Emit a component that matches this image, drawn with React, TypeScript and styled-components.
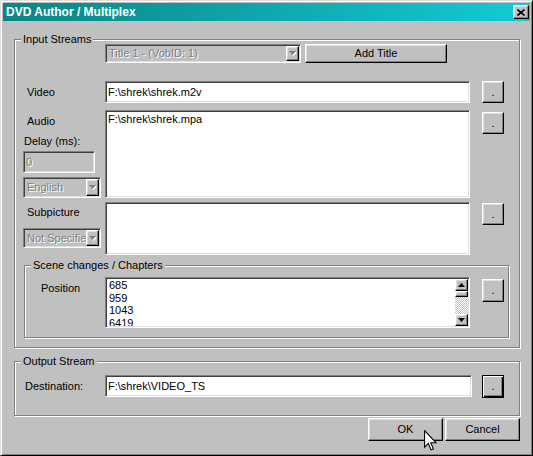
import React from 'react';
import styled, { createGlobalStyle, css } from 'styled-components';

const GlobalStyle = createGlobalStyle`
  html, body { margin: 0; padding: 0; background: #c0c0c0; }
  body { font-family: "Liberation Sans", Arial, sans-serif; font-size: 11px; }
  * { box-sizing: border-box; }
`;

const raised = css`
  border: 1px solid;
  border-color: #fff #000 #000 #fff;
  box-shadow: inset -1px -1px 0 #808080, inset 1px 1px 0 #dfdfdf;
  background: #c0c0c0;
`;

const sunken = css`
  border: 1px solid;
  border-color: #808080 #fff #fff #808080;
  box-shadow: inset 1px 1px 0 #404040, inset -1px -1px 0 #dfdfdf;
`;

const Window = styled.div`
  position: relative;
  width: 533px;
  height: 456px;
  background: #c0c0c0;
  border: 1px solid;
  border-color: #dfdfdf #000 #000 #dfdfdf;
  box-shadow: inset 1px 1px 0 #fff, inset -1px -1px 0 #808080;
  padding: 2px;
  display: flex;
  flex-direction: column;
  font-family: "Liberation Sans", Arial, sans-serif;
  font-size: 11px;
  line-height: 13px;
  color: #000;
  overflow: hidden;
`;

const TitleBar = styled.div`
  height: 18px;
  flex: none;
  display: flex;
  align-items: center;
  justify-content: space-between;
  padding: 0 1px 0 3px;
  background: linear-gradient(to right, #0a8585, #12cbd5);
`;

const TitleText = styled.span`
  color: #fff;
  font-weight: bold;
  font-size: 12px;
  white-space: nowrap;
`;

const CloseButton = styled.div`
  ${raised};
  width: 16px;
  height: 14px;
  display: flex;
  align-items: center;
  justify-content: center;
`;

const Body = styled.div`
  padding: 18px 10px 0 11px;
  display: flex;
  flex-direction: column;
`;

const Group = styled.div<{ $mt?: number; $ml?: number; $pad: string }>`
  position: relative;
  margin-top: ${(p) => p.$mt ?? 0}px;
  margin-left: ${(p) => p.$ml ?? 0}px;
  border: 1px solid #808080;
  box-shadow: inset 1px 1px 0 #fff, 1px 1px 0 #fff;
  padding: ${(p) => p.$pad};
  display: flex;
  flex-direction: column;
`;

const Legend = styled.span`
  position: absolute;
  top: -7px;
  left: 6px;
  padding: 0 2px;
  background: #c0c0c0;
  line-height: 13px;
  white-space: nowrap;
`;

const TitleRow = styled.div`
  display: flex;
  gap: 4px;
  padding-left: 82px;
  height: 19px;
`;

const FieldRow = styled.div<{ $mt: number; $cols?: string; $gap?: number }>`
  display: grid;
  grid-template-columns: ${(p) => p.$cols ?? '70px 365px 22px'};
  column-gap: ${(p) => p.$gap ?? 12}px;
  margin-top: ${(p) => p.$mt}px;
  align-items: start;
`;

const LeftCol = styled.div`
  display: flex;
  flex-direction: column;
  align-items: flex-start;
`;

const Label = styled.div<{ $pl?: number; $pt?: number; $mt?: number; $h?: number }>`
  padding-left: ${(p) => p.$pl ?? 0}px;
  padding-top: ${(p) => p.$pt ?? 0}px;
  margin-top: ${(p) => p.$mt ?? 0}px;
  height: ${(p) => (p.$h ? `${p.$h}px` : 'auto')};
  display: flex;
  align-items: ${(p) => (p.$h ? 'center' : 'flex-start')};
  white-space: nowrap;
`;

const Field = styled.div<{ $w?: number; $h: number; $disabled?: boolean; $mt?: number }>`
  ${sunken};
  flex: none;
  width: ${(p) => (p.$w ? `${p.$w}px` : '100%')};
  height: ${(p) => p.$h}px;
  margin-top: ${(p) => p.$mt ?? 0}px;
  background: ${(p) => (p.$disabled ? '#c0c0c0' : '#fff')};
  color: ${(p) => (p.$disabled ? '#808080' : '#000')};
  text-shadow: ${(p) => (p.$disabled ? '1px 1px 0 #fff' : 'none')};
  padding: ${(p) => (p.$h > 24 ? '2px 2px' : '4px 2px')};
  white-space: nowrap;
  overflow: hidden;
`;

const Combo = styled.div<{ $w: number; $h: number; $mt?: number }>`
  ${sunken};
  flex: none;
  width: ${(p) => p.$w}px;
  height: ${(p) => p.$h}px;
  margin-top: ${(p) => p.$mt ?? 0}px;
  background: #c0c0c0;
  padding: 1px;
  display: flex;
`;

const ComboText = styled.div`
  flex: 1;
  min-width: 0;
  overflow: hidden;
  white-space: nowrap;
  color: #808080;
  text-shadow: 1px 1px 0 #fff;
  padding-left: 2px;
  display: flex;
  align-items: center;
`;

const ArrowButton = styled.div<{ $h?: number }>`
  ${raised};
  width: 13px;
  flex: none;
  height: ${(p) => (p.$h ? `${p.$h}px` : 'auto')};
  display: flex;
  align-items: center;
  justify-content: center;
`;

const Button = styled.div<{ $w: number; $h: number; $mt?: number; $default?: boolean }>`
  ${raised};
  flex: none;
  width: ${(p) => p.$w}px;
  height: ${(p) => p.$h}px;
  margin-top: ${(p) => p.$mt ?? 0}px;
  display: flex;
  align-items: center;
  justify-content: center;
  white-space: nowrap;
  ${(p) =>
    p.$default &&
    css`
      border: 1px solid #000;
      box-shadow: inset 1px 1px 0 #fff, inset -1px -1px 0 #000, inset -2px -2px 0 #808080;
    `}
`;

const ListBox = styled.div`
  ${sunken};
  width: 365px;
  height: 51px;
  background: #fff;
  padding: 1px;
  display: flex;
`;

const ListItems = styled.div`
  flex: 1;
  padding: 0 2px;
  overflow: hidden;
  line-height: 12.7px;
`;

const ScrollBar = styled.div`
  width: 13px;
  flex: none;
  display: flex;
  flex-direction: column;
`;

const ScrollThumb = styled.div`
  ${raised};
  height: 6px;
  flex: none;
`;

const ScrollTrack = styled.div`
  flex: 1;
  background: repeating-conic-gradient(#c0c0c0 0 25%, #fff 0 50%) 0 0 / 2px 2px;
`;

const Footer = styled.div`
  display: flex;
  justify-content: flex-end;
  gap: 2px;
  margin-top: 2px;
`;

const Cursor = styled.svg`
  position: absolute;
  left: 423px;
  top: 429px;
`;

const Tri: React.FC<{ up?: boolean; disabled?: boolean }> = ({ up, disabled }) => (
  <svg width="8" height="5" viewBox="0 0 8 5">
    {disabled && <polygon points={up ? '4,1 8,5 1,5' : '1,1 8,1 4.5,5'} fill="#fff" />}
    <polygon
      points={up ? '3.5,0 7,4 0,4' : '0,0 7,0 3.5,4'}
      fill={disabled ? '#808080' : '#000'}
    />
  </svg>
);

const DropCombo: React.FC<{ w: number; h: number; mt?: number; text: string }> = ({ w, h, mt, text }) => (
  <Combo $w={w} $h={h} $mt={mt}>
    <ComboText>{text}</ComboText>
    <ArrowButton>
      <Tri disabled />
    </ArrowButton>
  </Combo>
);

export default function App() {
  return (
    <>
      <GlobalStyle />
      <Window>
        <TitleBar>
          <TitleText>DVD Author / Multiplex</TitleText>
          <CloseButton>
            <svg width="8" height="7" viewBox="0 0 8 7">
              <path d="M0.5 0.5 L7.5 6.5 M7.5 0.5 L0.5 6.5" stroke="#000" strokeWidth="1.6" />
            </svg>
          </CloseButton>
        </TitleBar>
        <Body>
          <Group $pad="4px 10px 9px 8px">
            <Legend>Input Streams</Legend>
            <TitleRow>
              <DropCombo w={196} h={19} text="Title 1 - (VobID: 1)" />
              <Button $w={142} $h={19}>Add Title</Button>
            </TitleRow>

            <FieldRow $mt={18}>
              <Label $pl={4} $h={22}>Video</Label>
              <Field $h={22}>F:\shrek\shrek.m2v</Field>
              <Button $w={22} $h={22}>.</Button>
            </FieldRow>

            <FieldRow $mt={7}>
              <LeftCol>
                <Label $pl={4} $pt={5}>Audio</Label>
                <Label $pl={1} $mt={7}>Delay (ms):</Label>
                <Field $w={72} $h={22} $mt={3} $disabled>0</Field>
                <DropCombo w={78} h={21} mt={4} text="English" />
              </LeftCol>
              <Field $h={88}>F:\shrek\shrek.mpa</Field>
              <Button $w={22} $h={22} $mt={2}>.</Button>
            </FieldRow>

            <FieldRow $mt={4}>
              <LeftCol>
                <Label $pl={4} $pt={4}>Subpicture</Label>
                <DropCombo w={78} h={20} mt={9} text="Not Specified" />
              </LeftCol>
              <Field $h={53} />
              <Button $w={22} $h={22} $mt={1}>.</Button>
            </FieldRow>

            <Group $mt={10} $ml={1} $pad="11px 4px 9px 0">
              <Legend>Scene changes / Chapters</Legend>
              <FieldRow $mt={0} $cols="68px 365px 22px">
                <Label $pl={16} $pt={5}>Position</Label>
                <ListBox>
                  <ListItems>
                    <div>685</div>
                    <div>959</div>
                    <div>1043</div>
                    <div>6419</div>
                  </ListItems>
                  <ScrollBar>
                    <ArrowButton $h={12}>
                      <Tri up />
                    </ArrowButton>
                    <ScrollThumb />
                    <ScrollTrack />
                    <ArrowButton $h={12}>
                      <Tri />
                    </ArrowButton>
                  </ScrollBar>
                </ListBox>
                <Button $w={22} $h={23} $mt={2}>.</Button>
              </FieldRow>
            </Group>
          </Group>

          <Group $mt={13} $pad="13px 10px 17px 8px">
            <Legend>Output Stream</Legend>
            <FieldRow $mt={0} $cols="72px 367px 22px" $gap={10}>
              <Label $pl={2} $h={22}>Destination:</Label>
              <Field $h={22}>F:\shrek\VIDEO_TS</Field>
              <Button $w={22} $h={23} $default>.</Button>
            </FieldRow>
          </Group>

          <Footer>
            <Button $w={75} $h={23}>OK</Button>
            <Button $w={75} $h={23}>Cancel</Button>
          </Footer>
        </Body>
        <Cursor width="13" height="21" viewBox="0 0 12 19.5">
          <path
            d="M0.5 0.5 L0.5 16 L4 12.5 L6.5 18.5 L8.7 17.6 L6.3 11.8 L11 11.8 Z"
            fill="#fff"
            stroke="#000"
            strokeWidth="1"
            strokeLinejoin="miter"
          />
        </Cursor>
      </Window>
    </>
  );
}
